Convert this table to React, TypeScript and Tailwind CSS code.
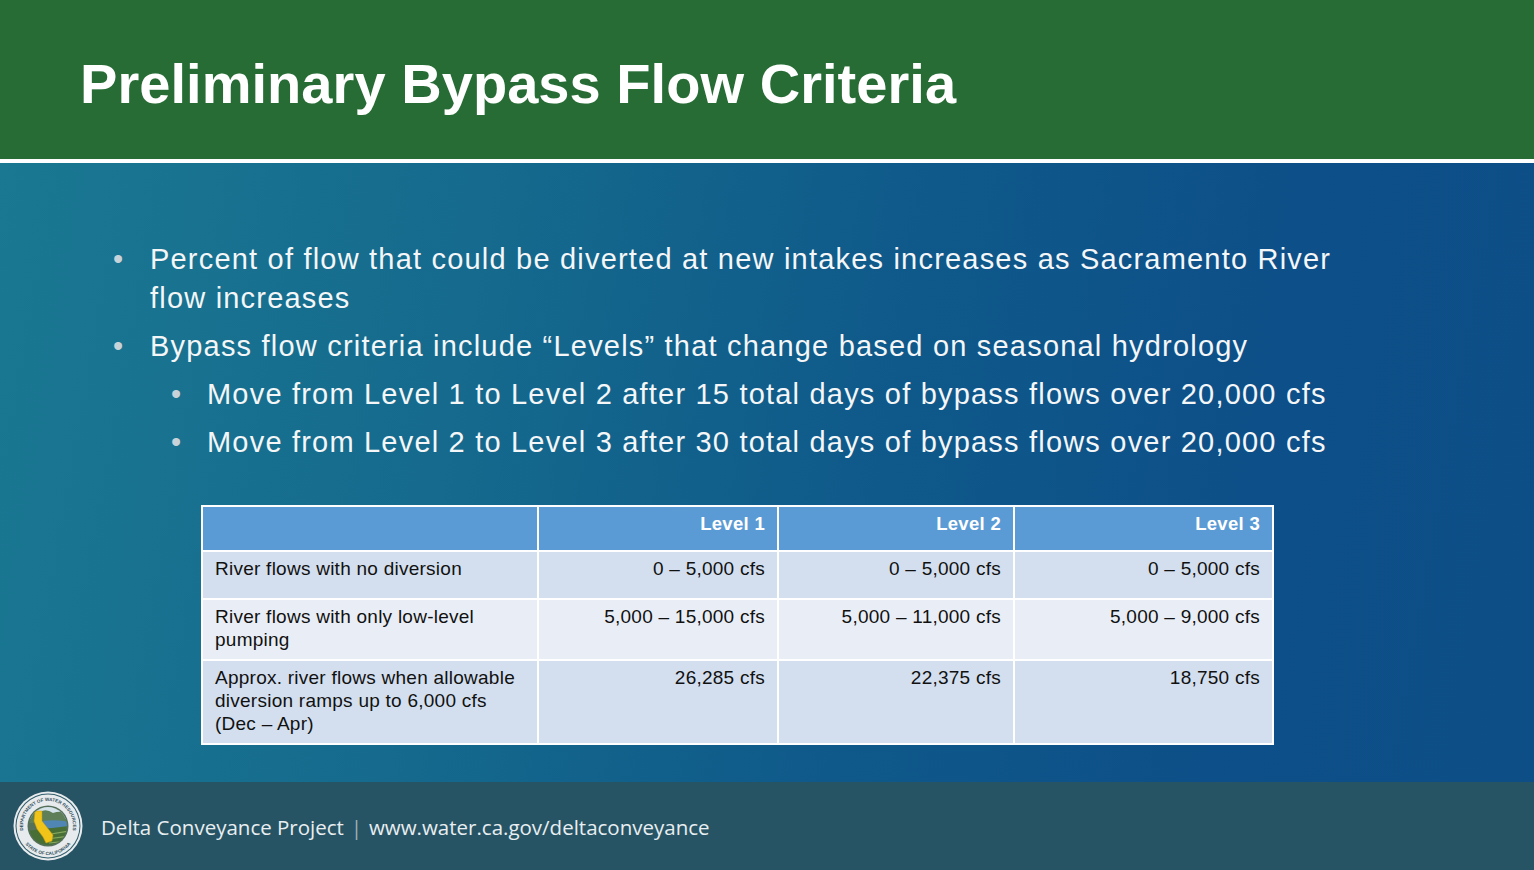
import React from "react";

const rows = [
  {
    label: "River flows with no diversion",
    values: ["0 – 5,000 cfs", "0 – 5,000 cfs", "0 – 5,000 cfs"],
    h: "h-[46px]",
    bg: "bg-[#d3dfee]",
  },
  {
    label: "River flows with only low-level pumping",
    values: ["5,000 – 15,000 cfs", "5,000 – 11,000 cfs", "5,000 – 9,000 cfs"],
    h: "h-[59px]",
    bg: "bg-[#e9eef6]",
  },
  {
    label: "Approx. river flows when allowable diversion ramps up to 6,000 cfs (Dec – Apr)",
    values: ["26,285 cfs", "22,375 cfs", "18,750 cfs"],
    h: "h-[82px]",
    bg: "bg-[#d3dfee]",
  },
];

function Seal() {
  return (
    <svg width="70" height="70" viewBox="0 0 70 70">
      <defs>
        <path id="topArc" d="M 11.5 43.55 A 25 25 0 1 1 58.5 43.55" />
        <path id="botArc" d="M 9.9 49.5 A 29 29 0 0 0 60.1 49.5" />
        <clipPath id="inner">
          <circle cx="35" cy="35" r="19" />
        </clipPath>
      </defs>
      <circle cx="35" cy="35" r="34.5" fill="#e9ecef" />
      <circle cx="35" cy="35" r="32.5" fill="#2f5c68" />
      <circle cx="35" cy="35" r="31.5" fill="#e7ebee" />
      <text fontSize="4.6" fill="#33515c" fontFamily="Liberation Sans, sans-serif" fontWeight="700">
        <textPath href="#topArc" startOffset="50%" textAnchor="middle">
          DEPARTMENT OF WATER RESOURCES
        </textPath>
      </text>
      <text fontSize="4.6" fill="#33515c" fontFamily="Liberation Sans, sans-serif" fontWeight="700">
        <textPath href="#botArc" startOffset="50%" textAnchor="middle">
          STATE OF CALIFORNIA
        </textPath>
      </text>
      <circle cx="35" cy="35" r="20.5" fill="#55705a" />
      <g clipPath="url(#inner)">
        <rect x="14" y="14" width="42" height="14" fill="#d4e2ea" />
        <path d="M14 24 Q 20 18 27 21 Q 33 17 40 22 Q 48 19 56 23 L56 32 L14 32 Z" fill="#5e7f57" />
        <path d="M30 30 Q 42 28 56 31 L56 38 Q 44 36 30 38 Z" fill="#4f86b4" />
        <path d="M14 40 L56 35 L56 56 L14 56 Z" fill="#476f35" />
        <path d="M32 44 L56 40 M34 48 L56 45 M36 52 L56 50" stroke="#86a85e" strokeWidth="1.2" />
        <path d="M22 20 L29 20 L29 30 L40 44 L39 50 L33 52 L30 46 L24 38 L21 30 Z" fill="#f0c419" stroke="#c99a10" strokeWidth="0.5" />
      </g>
    </svg>
  );
}

export default function App() {
  return (
    <div className="w-[1534px] h-[870px] flex flex-col overflow-hidden font-['Liberation_Sans',Arial,sans-serif]">
      {/* title bar */}
      <div className="h-[159px] bg-[#276c35] flex items-start pl-[80px] pt-[52px]">
        <h1 className="text-white font-bold text-[56px] leading-[64px] tracking-[0.05px]">
          Preliminary Bypass Flow Criteria
        </h1>
      </div>
      <div className="flex h-[4px]">
        <div className="w-[830px] bg-white" />
        <div className="w-[380px] bg-white mt-[1px]" />
        <div className="flex-1 bg-white" />
      </div>

      {/* body */}
      <div className="flex-1 bg-[linear-gradient(100deg,#1a7892_0%,#156a8d_30%,#0f5a8a_55%,#0d4f88_80%,#0d4e87_100%)] pt-[77px]">
        <ul className="text-[#f4f6f8] text-[29px] leading-[39px] tracking-[1.2px]">
          <li className="flex pl-[113px]">
            <span className="w-[37px] text-[#c8d2d9]">•</span>
            <span className="w-[1210px]">
              Percent of flow that could be diverted at new intakes increases as Sacramento River flow increases
            </span>
          </li>
          <li className="flex pl-[113px] mt-[9px]">
            <span className="w-[37px] text-[#c8d2d9]">•</span>
            <span>Bypass flow criteria include “Levels” that change based on seasonal hydrology</span>
          </li>
          <li className="flex pl-[171px] mt-[9px]">
            <span className="w-[36px] text-[#c8d2d9]">•</span>
            <span>Move from Level 1 to Level 2 after 15 total days of bypass flows over 20,000 cfs</span>
          </li>
          <li className="flex pl-[171px] mt-[9px]">
            <span className="w-[36px] text-[#c8d2d9]">•</span>
            <span>Move from Level 2 to Level 3 after 30 total days of bypass flows over 20,000 cfs</span>
          </li>
        </ul>

        <div className="ml-[201px] mt-[43px] w-[1073px] bg-white p-[2px] flex flex-col gap-[2px]">
          <div className="flex gap-[2px] h-[43px]">
            <div className="w-[334px] bg-[#5b9bd5]" />
            {["Level 1", "Level 2", "Level 3"].map((l, i) => (
              <div
                key={l}
                className={`${i === 0 ? "w-[238px]" : i === 1 ? "w-[234px]" : "flex-1"} bg-[#5b9bd5] text-white font-bold text-[18.5px] tracking-[0.3px] text-right pr-[12px] pt-[3px]`}
              >
                {l}
              </div>
            ))}
          </div>
          {rows.map((r) => (
            <div key={r.label} className={`flex gap-[2px] ${r.h}`}>
              <div className={`w-[334px] ${r.bg} text-[#111] text-[19px] leading-[23px] tracking-[0.25px] pl-[12px] pr-[8px] pt-[5px]`}>
                {r.label}
              </div>
              {r.values.map((v, i) => (
                <div
                  key={i}
                  className={`${i === 0 ? "w-[238px]" : i === 1 ? "w-[234px]" : "flex-1"} ${r.bg} text-[#111] text-[19px] leading-[23px] tracking-[0.25px] text-right pr-[12px] pt-[5px]`}
                >
                  {v}
                </div>
              ))}
            </div>
          ))}
        </div>
      </div>

      {/* footer */}
      <div className="h-[88px] bg-[#275464] flex items-center pl-[13px]">
        <Seal />
        <div className="ml-[18px] mt-[3px] flex items-center text-[#e8eef1] text-[20.5px] font-['Open_Sans',sans-serif]">
          <span>Delta Conveyance Project</span>
          <span className="mx-[7px] text-[#9fb3bb] text-[20px]">|</span>
          <span>www.water.ca.gov/deltaconveyance</span>
        </div>
      </div>
    </div>
  );
}
